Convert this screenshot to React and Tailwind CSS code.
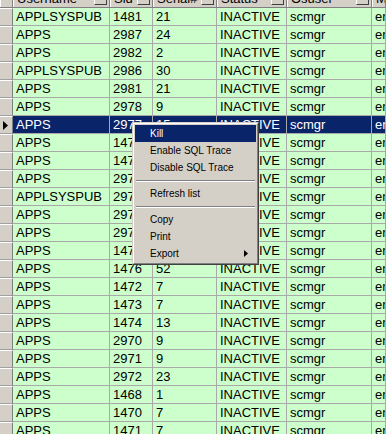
import React from "react";

const cols = [
  { key: "user", label: "Username", w: "w-[97px]" },
  { key: "sid", label: "Sid", w: "w-[43px]" },
  { key: "serial", label: "Serial#", w: "w-[64px]" },
  { key: "status", label: "Status", w: "w-[70px]" },
  { key: "osuser", label: "Osuser", w: "w-[85px]" },
  { key: "machine", label: "Machine", w: "flex-1" },
];

const rows = [
  ["APPLSYSPUB", "1481", "21"],
  ["APPS", "2987", "24"],
  ["APPS", "2982", "2"],
  ["APPLSYSPUB", "2986", "30"],
  ["APPS", "2981", "21"],
  ["APPS", "2978", "9"],
  ["APPS", "2977", "15"],
  ["APPS", "1477", "3"],
  ["APPS", "1478", "5"],
  ["APPS", "2975", "11"],
  ["APPLSYSPUB", "2974", "6"],
  ["APPS", "2973", "8"],
  ["APPS", "2979", "4"],
  ["APPS", "1475", "17"],
  ["APPS", "1476", "52"],
  ["APPS", "1472", "7"],
  ["APPS", "1473", "7"],
  ["APPS", "1474", "13"],
  ["APPS", "2970", "9"],
  ["APPS", "2971", "9"],
  ["APPS", "2972", "23"],
  ["APPS", "1468", "1"],
  ["APPS", "1470", "7"],
  ["APPS", "1471", "7"],
];

const SELECTED = 6;

function MenuItem({ label, active, sub }) {
  return (
    <div
      className={`h-[17px] flex items-center pl-[15px] pr-[8px] leading-none ${
        active ? "bg-[#0a246a] text-white" : "text-black"
      }`}
    >
      <span className="flex-1">{label}</span>
      {sub && (
        <svg width="4" height="7" viewBox="0 0 4 7">
          <path d="M0 0 L4 3.5 L0 7 Z" fill="#000" />
        </svg>
      )}
    </div>
  );
}

function Separator() {
  return (
    <div className="h-[9px] flex flex-col justify-center px-[1px]">
      <div className="h-px bg-[#808080]" />
      <div className="h-px bg-white" />
    </div>
  );
}

export default function App() {
  return (
    <div className="relative w-[386px] h-[434px] overflow-hidden bg-[#ccffcc] font-['Liberation_Sans',Arial,sans-serif] text-[13px]">
      <div className="-mt-[10px]">
        {/* header */}
        <div className="flex h-[18px] bg-[#d4d0c8] border-b border-[#808080]">
          <div className="w-[13px] shrink-0 border-r border-[#808080] border-l border-l-white" />
          {cols.map((c) => (
            <div
              key={c.key}
              className={`${c.w} shrink-0 flex items-center pl-[3px] pr-[2px] border-r border-[#808080] border-l border-l-white overflow-hidden`}
            >
              <span className="flex-1 whitespace-nowrap">{c.label}</span>
              {c.key !== "machine" && (
                <div className="w-[13px] h-[13px] shrink-0 bg-[#d4d0c8] border border-t-white border-l-white border-r-[#404040] border-b-[#404040]" />
              )}
            </div>
          ))}
        </div>

        {/* rows */}
        {rows.map((r, i) => {
          const sel = i === SELECTED;
          const cells = [r[0], r[1], r[2], "INACTIVE", "scmgr", "erpsrv01"];
          return (
            <div key={i} className="flex h-[18px]">
              <div className="w-[13px] shrink-0 bg-[#d4d0c8] border-r border-[#808080] border-b border-b-[#a0a0a0] border-t border-t-white flex items-center pl-[3px]">
                {sel && (
                  <svg width="5" height="9" viewBox="0 0 5 9">
                    <path d="M0 0 L5 4.5 L0 9 Z" fill="#000" />
                  </svg>
                )}
              </div>
              {cells.map((t, j) => (
                <div
                  key={j}
                  className={`${cols[j].w} shrink-0 flex items-center pl-[3px] border-r border-b border-[#a9a9a9] overflow-hidden whitespace-nowrap ${
                    sel ? "bg-[#0a246a] text-white" : "text-black"
                  }`}
                >
                  {t}
                </div>
              ))}
            </div>
          );
        })}
      </div>

      {/* context menu */}
      <div className="absolute left-[132px] top-[122px] w-[127px] bg-[#d4d0c8] border border-t-[#d4d0c8] border-l-[#d4d0c8] border-r-[#404040] border-b-[#404040] font-['Liberation_Sans',Arial,sans-serif] text-[10px]">
        <div className="border border-t-white border-l-white border-r-[#808080] border-b-[#808080] p-[1px]">
          <MenuItem label="Kill" active />
          <MenuItem label="Enable SQL Trace" />
          <MenuItem label="Disable SQL Trace" />
          <Separator />
          <MenuItem label="Refresh list" />
          <Separator />
          <MenuItem label="Copy" />
          <MenuItem label="Print" />
          <MenuItem label="Export" sub />
        </div>
      </div>
    </div>
  );
}
